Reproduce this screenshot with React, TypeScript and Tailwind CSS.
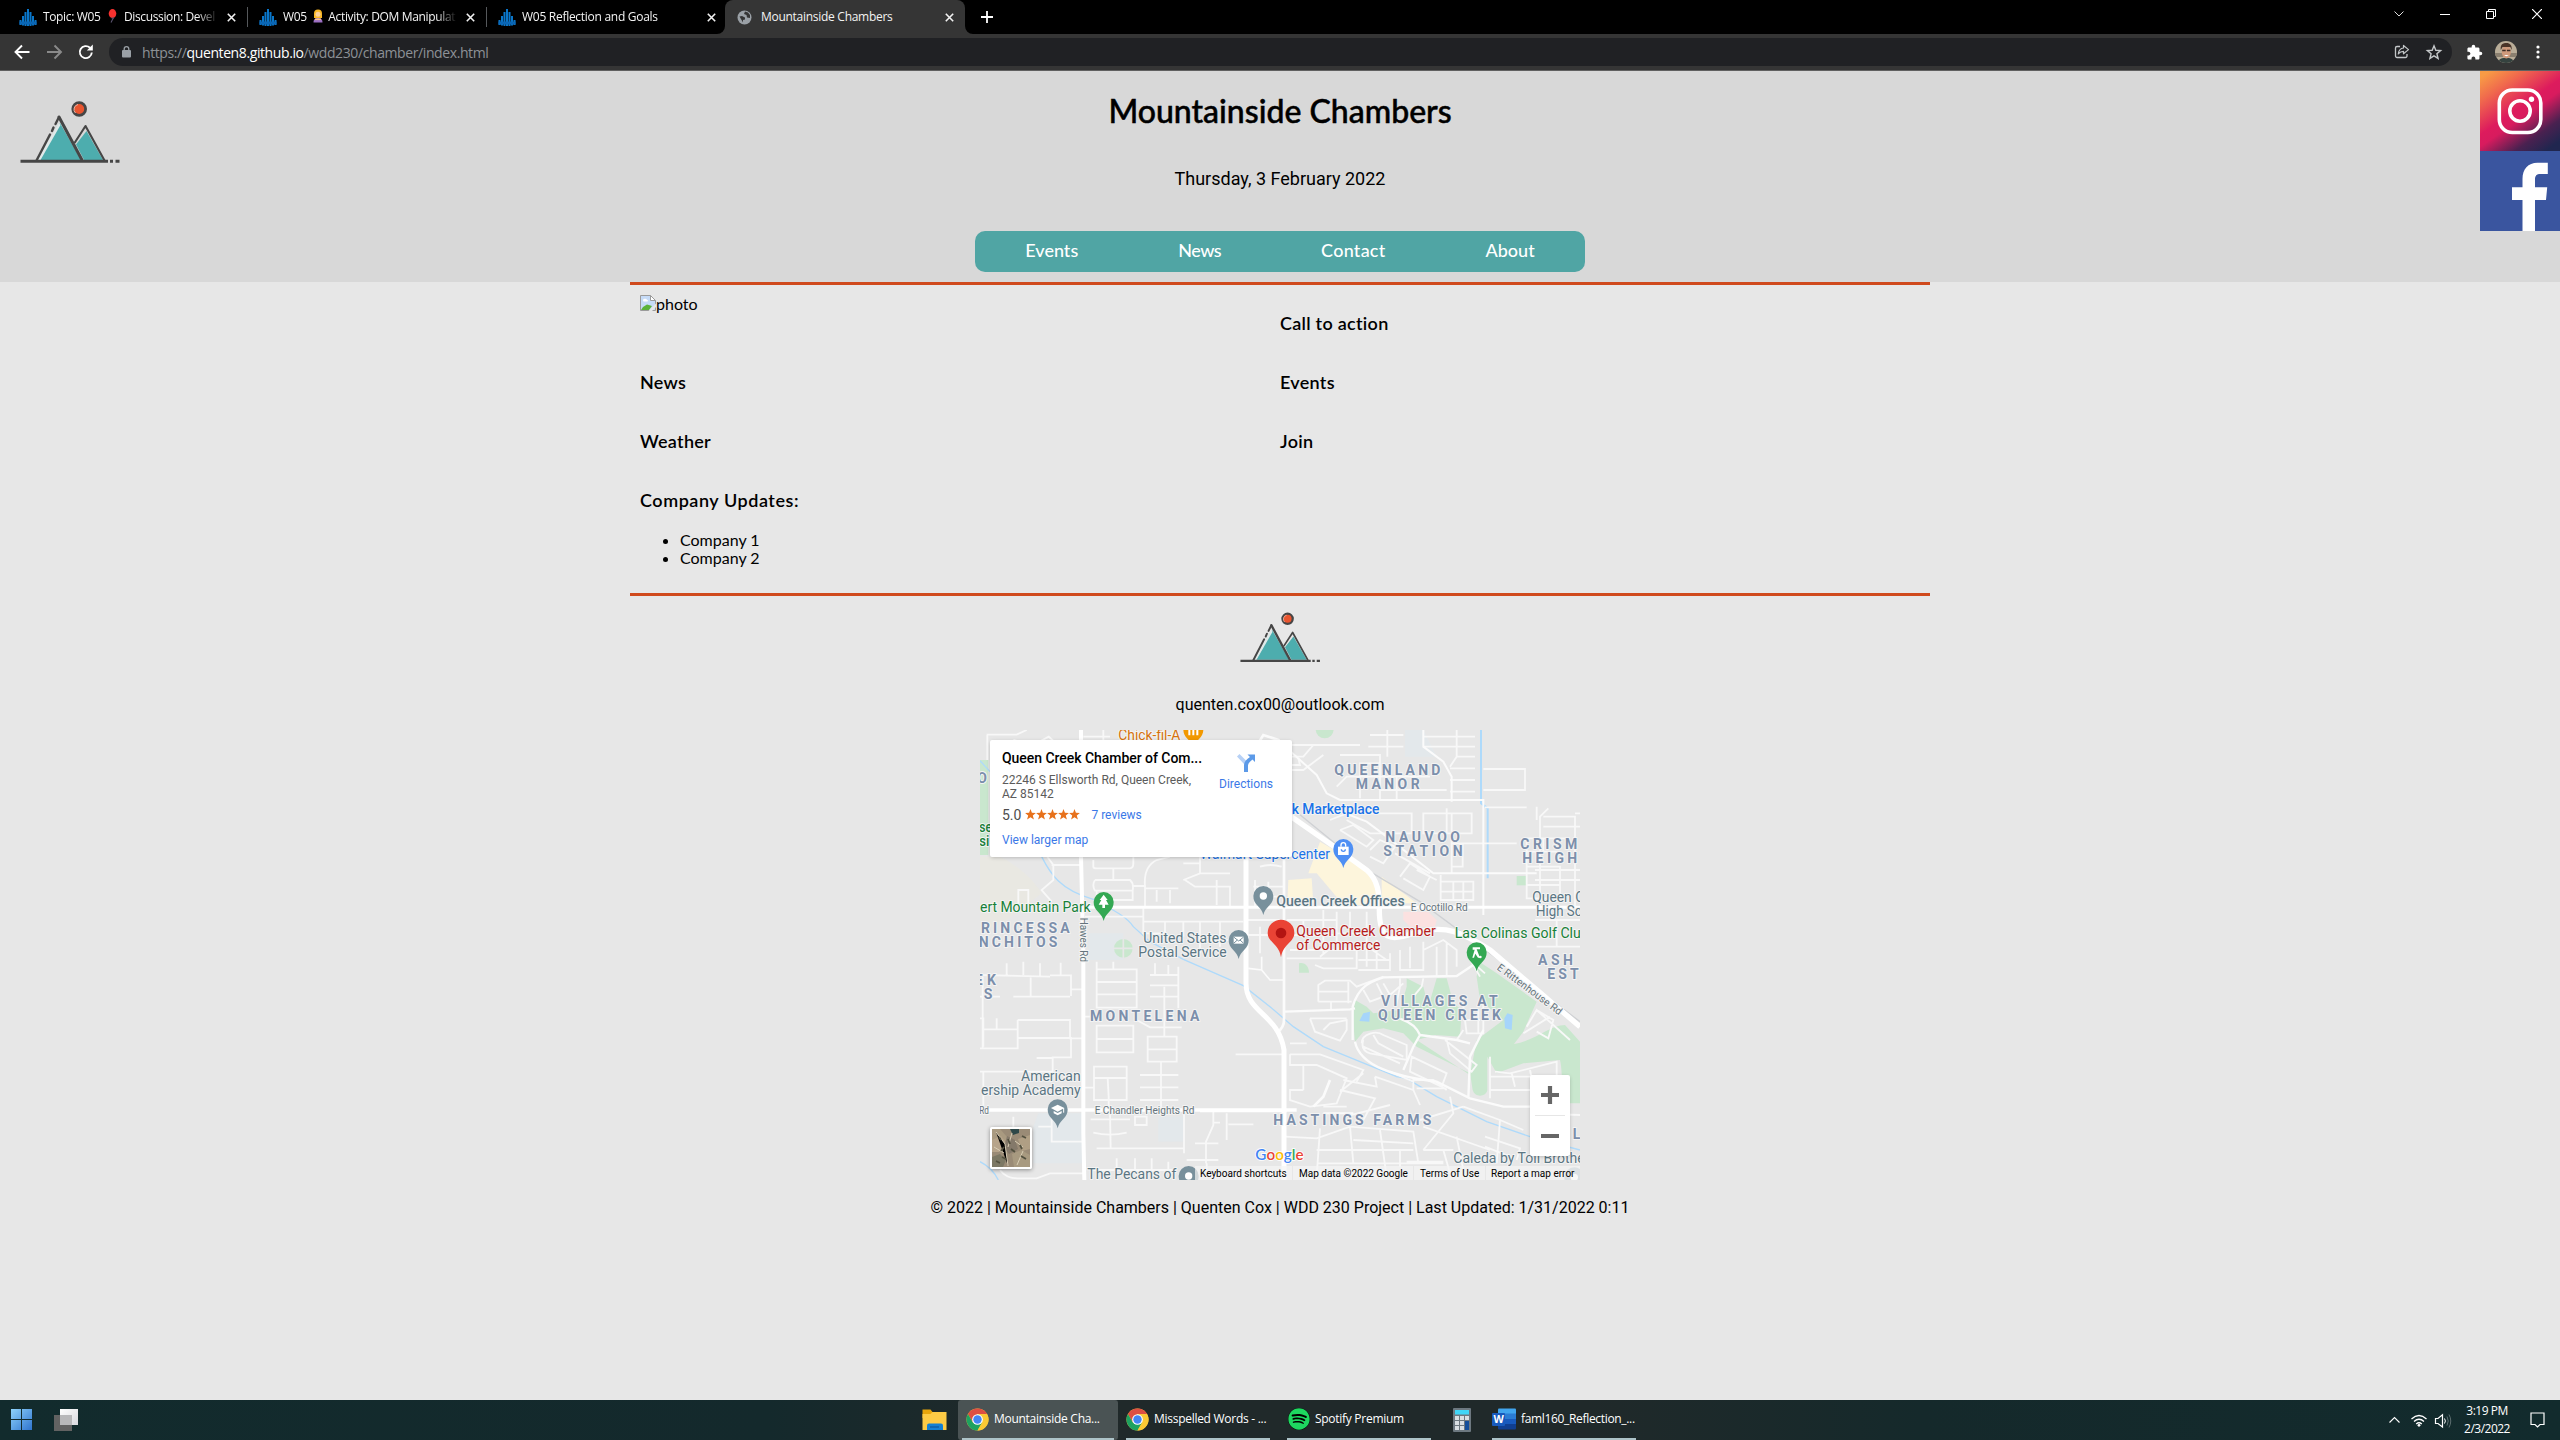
import React from 'react';
import { FaSpotify } from 'react-icons/fa';
import { MdExtension } from 'react-icons/md';

/* ---------- browser chrome ---------- */

function SchoolIcon() {
  return (
    <svg width="18" height="18" viewBox="0 0 18 18" className="shrink-0">
      <g fill="#0a76c9">
        <rect x="0.5" y="12" width="2" height="5" />
        <rect x="3" y="8" width="2" height="9.5" />
        <rect x="5.5" y="4" width="2" height="14" />
        <rect x="8" y="1" width="2" height="17" />
        <rect x="10.5" y="4" width="2" height="14" />
        <rect x="13" y="8" width="2" height="9.5" />
        <rect x="15.5" y="12" width="2" height="5" />
      </g>
      <path d="M0.5 13.5h17v3h-17z" fill="#0a66b5" />
    </svg>
  );
}

function Balloon() {
  return (
    <svg width="12" height="14" viewBox="0 0 12 14" className="mx-[3px] inline-block align-[-2px]">
      <ellipse cx="6.5" cy="4.6" rx="3.8" ry="4.5" fill="#f8312f" />
      <path d="M5.5 9 7.5 9 6.5 10.5 5 13.5" fill="none" stroke="#5b5470" strokeWidth="1.1" />
    </svg>
  );
}

function Person() {
  return (
    <svg width="12" height="14" viewBox="0 0 12 14" className="mx-[2px] inline-block align-[-2px]">
      <path d="M2 9V4.500a4 4 0 0 1 8 0V9z" fill="#f9b826" />
      <circle cx="6" cy="5.200" r="2.500" fill="#fbd09b" />
      <path d="M1.500 13.500c0-3.500 2-4.500 4.500-4.500s4.500 1 4.500 4.500z" fill="#9b6fc4" />
      <path d="M3 9.500h6v1.600H3z" fill="#fbc58a" />
    </svg>
  );
}

function CloseX({ className = '' }: { className?: string }) {
  return (
    <svg width="9" height="9" viewBox="0 0 9 9" className={'shrink-0 ' + className}>
      <path d="M0.8 0.8 8.2 8.2M8.2 0.8 0.8 8.2" stroke="#f2f2f2" strokeWidth="1.6" />
    </svg>
  );
}

function Tab({ children, sep, width }: { children: React.ReactNode; sep?: boolean; width: string }) {
  return (
    <div className={'flex h-[34px] items-center pl-[11px] ' + width}>
      <SchoolIcon />
      <div className="ml-[6px] w-[176px] overflow-hidden whitespace-nowrap [mask-image:linear-gradient(90deg,#000_88%,transparent)]">
        {children}
      </div>
      <CloseX className="ml-[9px]" />
      {sep && <div className="ml-[11px] h-5 w-px bg-[#55585b]" />}
    </div>
  );
}

function TabStrip() {
  return (
    <div className="flex h-[34px] bg-black font-['Open_Sans','Noto_Sans',sans-serif] text-[12px] tracking-[-0.28px] text-[#f3f3f3]">
      <div className="w-2" />
      <Tab sep width="w-[240px]"><span className="tracking-[-0.36px]">Topic: W05 <Balloon /> Discussion: Devel</span></Tab>
      <Tab sep width="w-[239px]"><span className="tracking-[-0.34px]">W05 <Person /> Activity: DOM Manipulat</span></Tab>
      <Tab width="w-[238px]">W05 Reflection and Goals</Tab>
      <div className="relative flex h-[34px] w-[240px] items-center rounded-t-[8px] bg-[#353535] pl-3">
        <svg width="8" height="8" className="absolute bottom-0 left-[-8px]"><path d="M8 0V8H0A8 8 0 0 0 8 0Z" fill="#353535" /></svg>
        <svg width="8" height="8" className="absolute right-[-8px] bottom-0"><path d="M0 0V8H8A8 8 0 0 1 0 0Z" fill="#353535" /></svg>
        <svg width="15" height="15" viewBox="0 0 15 15">
          <circle cx="7.500" cy="7.500" r="7" fill="#9aa0a6" />
          <path d="M2.500 6.500 5 6l3 1.500v2L6 10v2.500Z" fill="#353535" />
          <path d="M8 1.500 7 4l2.500 1 .5 2.500 3 .5V5L11 2.500Z" fill="#353535" />
        </svg>
        <div className="ml-[9px] w-[175px]">Mountainside Chambers</div>
        <CloseX className="ml-[9px]" />
      </div>
      <svg width="12" height="12" viewBox="0 0 12 12" className="mt-[11px] ml-4">
        <path d="M6 0v12M0 6h12" stroke="#fff" strokeWidth="1.800" />
      </svg>
      <div className="mt-[9px] ml-auto flex h-[10px] items-center gap-9 pr-[18px]">
        <svg width="10" height="10" viewBox="0 0 10 10"><path d="M0.500 2.500 5 7 9.500 2.500" fill="none" stroke="#ddd" strokeWidth="1" /></svg>
        <svg width="10" height="10" viewBox="0 0 10 10"><path d="M0 5.500h10" stroke="#fff" /></svg>
        <svg width="10" height="10" viewBox="0 0 10 10"><path d="M0.500 2.500h7v7h-7zM2.500 2.500v-2h7v7h-2" fill="none" stroke="#fff" /></svg>
        <svg width="10" height="10" viewBox="0 0 10 10"><path d="M0 0 10 10M10 0 0 10" stroke="#fff" strokeWidth="1.200" /></svg>
      </div>
    </div>
  );
}

function Toolbar() {
  return (
    <div className="flex h-[37px] items-center border-b border-[#606060] bg-[#353535] font-['Open_Sans','Noto_Sans',sans-serif]">
      <svg width="109" height="36" viewBox="0 34 109 36" fill="none" strokeWidth="1.900">
        <path d="M29.500 52H16M22 45.500 15.500 52 22 58.500" stroke="#fff" />
        <path d="M47 52H60.500M54.500 45.500 61 52 54.500 58.500" stroke="#8a8a8a" />
        <path d="M91.800 52.500A6 6 0 1 1 90 47.800" stroke="#fff" />
        <path d="M92.800 44.500V50.500H86.800Z" fill="#fff" stroke="none" />
      </svg>
      <div className="flex h-7 w-[2343px] items-center rounded-full bg-[#202124]">
        <svg width="9" height="12" viewBox="0 0 9 12" className="ml-[13px]">
          <rect x="0" y="4" width="9" height="7.500" rx="1" fill="#9aa0a6" />
          <path d="M2.200 5V3a2.300 2.300 0 0 1 4.600 0v2" fill="none" stroke="#9aa0a6" strokeWidth="1.300" />
        </svg>
        <div className="ml-[11px] text-[14px] tracking-[-0.4px] whitespace-nowrap text-[#8d9196]">
          https://<span className="text-white">quenten8.github.io</span>/wdd230/chamber/index.html
        </div>
        <svg width="60" height="20" viewBox="2390 42 60 20" fill="none" stroke="#c4c7c9" className="mr-[2px] ml-auto">
          <path d="M2400 46.500h-3a1.500 1.500 0 0 0-1.500 1.500v8a1.500 1.500 0 0 0 1.500 1.500h8.500a1.500 1.500 0 0 0 1.500-1.500v-2" strokeWidth="1.300" />
          <path d="M2403.500 45.500v2.500c-3 .3-4.800 2.200-5.200 6 1.500-2 3-2.700 5.200-2.700v2.500l5-4.200z" strokeWidth="1.200" strokeLinejoin="round" />
          <path d="M2434 45.800 2435.800 50.300 2440.600 50.600 2436.900 53.700 2438.100 58.400 2434 55.800 2429.900 58.400 2431.100 53.700 2427.400 50.600 2432.200 50.300Z" strokeWidth="1.400" />
        </svg>
      </div>
      <MdExtension className="ml-[14px] size-[17px] text-white" />
      <svg width="22" height="22" viewBox="0 0 22 22" className="ml-[12px] rounded-full">
        <rect width="22" height="22" fill="#b9ad98" />
        <rect y="12" width="22" height="4" fill="#8a7f6f" />
        <path d="M3 22c1-5 4-5 8-5s7 0 8 5z" fill="#35423f" />
        <ellipse cx="11.300" cy="11" rx="4.600" ry="6.500" fill="#cf9a7c" />
        <path d="M5.800 9C5 3 8 2 11.500 2S17 4 16.800 9l-1.500-3H7.500z" fill="#4a3428" />
        <path d="M7.200 9.500h3.500M11.900 9.500h3.500" stroke="#3a2b25" strokeWidth="1.500" />
        <path d="M9 14c1.500 1.500 3.300 1.500 4.800 0z" fill="#fff" />
      </svg>
      <svg width="4" height="14" viewBox="0 0 4 14" className="ml-[19px]" fill="#fff">
        <circle cx="2" cy="2" r="1.600" /><circle cx="2" cy="7" r="1.600" /><circle cx="2" cy="12" r="1.600" />
      </svg>
    </div>
  );
}

/* ---------- site ---------- */

function MountainLogo({ className }: { className: string }) {
  return (
    <svg viewBox="20 98 102 66" className={className}>
      <path d="M86.500 131 103 160H84L76 144.500Z" fill="#4dadae" />
      <path d="M60 123 81 160H40Z" fill="#4dadae" />
      <path d="M59 123 37 160H40.500L60.500 125Z" fill="#dfe9e9" />
      <path d="M74.500 143 85.500 126 104.500 160.500" fill="none" stroke="#464646" strokeWidth="2.100" strokeLinejoin="round" />
      <path d="M59 117 82 160" stroke="#464646" strokeWidth="3" strokeLinecap="round" />
      <path d="M59 117 55.500 124M53.500 127.500 52 131M50 134.500 36.500 160.500" fill="none" stroke="#464646" strokeWidth="2.400" strokeLinecap="round" />
      <path d="M20.500 161.300H108M110 161.300H113M115.500 161.300H119.500" stroke="#464646" strokeWidth="3" />
      <circle cx="79.200" cy="109" r="6.400" fill="#e9552f" stroke="#464646" strokeWidth="2.800" />
      <path d="M75.500 113A5 5 0 0 1 78 104.500" fill="none" stroke="#f3b5a3" strokeWidth="1" />
    </svg>
  );
}

function SocialLinks() {
  return (
    <div className="w-20 justify-self-end">
      <svg width="80" height="80" viewBox="0 0 80 80" className="block">
        <defs>
          <linearGradient id="insta" x1="0.120" y1="0" x2="0.820" y2="1">
            <stop offset="0" stopColor="#f89b45" />
            <stop offset="0.200" stopColor="#f0694d" />
            <stop offset="0.480" stopColor="#dd1b5d" />
            <stop offset="0.580" stopColor="#d81b5e" />
            <stop offset="0.820" stopColor="#4a2150" />
            <stop offset="1" stopColor="#20264f" />
          </linearGradient>
        </defs>
        <rect width="80" height="80" fill="url(#insta)" />
        <rect x="19.300" y="19" width="41.500" height="42.500" rx="13" fill="none" stroke="#fff" strokeWidth="3.600" />
        <circle cx="40" cy="40" r="10.200" fill="none" stroke="#fff" strokeWidth="3.600" />
        <circle cx="51.500" cy="28.300" r="2.700" fill="#fff" />
      </svg>
      <svg width="80" height="80" viewBox="0 0 80 80" className="block">
        <rect width="80" height="80" fill="#3a559f" />
        <path d="M42.500 80V49H32V36.200h10.500V28c0-10 5.500-16.300 15-16.300h10.300V23h-7.300c-4 0-5.500 1.800-5.500 5.500v7.700h12.200L66 49H55v31z" fill="#fff" />
      </svg>
    </div>
  );
}

function SiteHeader() {
  return (
    <header className="grid h-[211px] grid-cols-[1fr_auto_1fr] bg-[#d8d8d8]">
      <MountainLogo className="mt-[27px] ml-5 h-[66px] w-[102px]" />
      <div className="flex flex-col items-center pt-5">
        <h1 className="text-[32px] leading-10 font-medium [-webkit-text-stroke:0.5px_#000]">Mountainside Chambers</h1>
        <p className="mt-9 font-['Roboto',sans-serif] text-[18px] leading-6">Thursday, 3 February 2022</p>
        <nav className="mt-10 flex h-[41px] w-[610px] items-center justify-center gap-[100px] rounded-[10px] bg-[#50a5a4] pb-[2px] text-[18px] font-medium text-white">
          <a>Events</a>
          <a className="tracking-[-0.5px]">News</a>
          <a className="tracking-[0.25px]">Contact</a>
          <a>About</a>
        </nav>
      </div>
      <SocialLinks />
    </header>
  );
}

function BrokenImage() {
  return (
    <svg width="16" height="16" viewBox="0 0 16 16">
      <path d="M0.500 0.500h10l5 5v10h-15z" fill="#c6dbf7" stroke="#9b9b9b" />
      <path d="M10.500 0.500v5h5z" fill="#fff" stroke="#9b9b9b" />
      <path d="M3 5.500a2 1.500 0 0 1 4-.5c1.500 0 1.500 1.500 0 1.500H3.500z" fill="#fff" />
      <path d="M1 15l2-3 4-2.500L12 11 9 15z" fill="#5bb33a" />
      <path d="M8.500 16 16 8.500V12l-4 4z" fill="#e7e7e7" />
    </svg>
  );
}

function Section({ children }: { children: React.ReactNode }) {
  return <h3 className="pt-[21px] text-[18px] leading-6 font-semibold tracking-[0.28px]">{children}</h3>;
}

function MainContent() {
  return (
    <main className="grid h-[314px] w-[1300px] auto-rows-[59px] grid-cols-2 border-y-[3px] border-[#d04a1d] px-[10px] pt-[5px] text-black">
      <div className="flex items-start pt-[5px]">
        <BrokenImage />
        <span className="text-[16px] leading-[17px]">photo</span>
      </div>
      <Section>Call to action</Section>
      <Section>News</Section>
      <Section>Events</Section>
      <Section>Weather</Section>
      <Section>Join</Section>
      <div>
        <h3 className="pt-[21px] text-[18px] leading-6 font-semibold tracking-[0.55px]">Company Updates:</h3>
        <ul className="mt-[19px] list-disc pl-10 text-[16px] leading-[18px]">
          <li>Company 1</li>
          <li>Company 2</li>
        </ul>
      </div>
    </main>
  );
}

/* ---------- map ---------- */

function Pin({ x, y, color, children }: { x: number; y: number; color: string; children?: React.ReactNode }) {
  return (
    <g transform={`translate(${x} ${y})`}>
      <path d="M0 57C-3 45-8 38-17 29-26 20-30 12-30 0a30 30 0 0 1 60 0C30 12 26 20 17 29 8 38 3 45 0 57Z" fill={color} />
      {children}
    </g>
  );
}

type LabelProps = { x: number; y: number; w: number; children: string; cls: string };
function Label({ x, y, w, children, cls }: LabelProps) {
  return <text x={x} y={y} textLength={w} lengthAdjust="spacingAndGlyphs" className={cls}>{children}</text>;
}

/* Neighbourhood names are letter-spaced; w is the advance of the whole name. */
function Area({ x, y, w, children }: { x: number; y: number; w: number; children: string }) {
  return <text x={x} y={y} textLength={w} lengthAdjust="spacing" className="fill-[#7c8fab] text-[42px] font-bold">{children}</text>;
}

const poi = 'fill-[#5b7683] text-[42px]';
const green = 'fill-[#178038] text-[42px]';
const blue = 'fill-[#1a73e8] text-[42px] font-medium';
const road = 'fill-[#66747c] text-[31px]';

function MapDrawing() {
  return (
    <svg width="600" height="450" viewBox="30 30 1800 1350" className="block font-['Roboto',sans-serif]">
      <rect x="30" y="30" width="1800" height="1350" fill="#e7e7e7" />

      {/* parks, retail areas, schools */}
      <g>
        <path d="M30 120H55V405H30Z" fill="#c9e7ce" />
        <path d="M30 410H90C150 440 190 480 215 520L110 600 30 640Z" fill="#e9e8e2" />
        <path d="M355 640H460V720H355Z" fill="#e3e8eb" />
        <circle cx="460" cy="685" r="28" fill="#c9e7ce" />
        <path d="M460 655V715M430 685H490" stroke="#e7e7e7" strokeWidth="5" />
        <circle cx="1064" cy="28" r="27" fill="#c9e7ce" />
        <path d="M1305 30H1360L1400 110H1305Z" fill="#e3e8eb" />
        <path d="M1050 365 1110 400 1200 460 1228 505V555H1120L1040 460H1015Z" fill="#fdf5dc" />
        <path d="M1235 470 1340 550H1235Z" fill="#fdf5dc" />
        <path d="M955 480 1025 475 1030 550H952Z" fill="#fdf5dc" />
        <path d="M1300 575H1375L1400 600 1395 620H1320L1300 600Z" fill="#fbe1e0" />
        <rect x="1640" y="468" width="28" height="28" fill="#c9e7ce" />
        <path d="M987 730C1005 725 1017 740 1017 758H987Z" fill="#c9e7ce" />
        <path d="M205 1180H340V1330H190V1220Z" fill="#e3e8eb" />
        <path d="M565 1190H640V1265H565Z" fill="#e3e8eb" />
        <path d="M1528 725 1580 760 1700 845 1660 935 1632 972C1700 960 1740 915 1785 915L1830 965V1150H1800C1770 1140 1780 1060 1770 1020L1660 1030 1580 1060 1552 1010V1110C1550 1130 1515 1135 1508 1110L1500 1060 1340 980 1300 940 1240 925 1180 935 1155 965 1148 890 1155 840 1190 860 1210 880 1290 870 1310 800V775L1360 800 1375 860 1400 775H1430L1450 850 1475 870 1470 950 1395 945 1340 960 1500 1065 1520 960 1600 900 1530 840 1520 770Z" fill="#c9e7ce" />
        <path d="M1180 880 1200 875 1198 905 1168 903Z M1612 880 1628 885 1625 930 1605 925 1603 895Z" fill="#a6d5fb" />
      </g>

      {/* creeks and canals */}
      <g fill="none" stroke="#aedafb" strokeWidth="4">
        <path d="M30 122 60 155M215 410C240 460 270 510 370 538 430 570 470 590 490 620L540 665 640 718 820 797 900 860 970 920 1060 980 1280 1070 1310 1075 1400 1130 1550 1205 1680 1250 1830 1290" />
        <path d="M1533 30V250L1553 265V475" strokeWidth="6" />
        <path d="M30 1325C50 1335 70 1350 85 1380" />
      </g>
      <path d="M880 195 1200 455 1350 545 1600 730 1830 905" fill="none" stroke="#cfd1d4" strokeWidth="4" />

      {/* minor streets */}
      <g fill="none" stroke="#f8f8f8" strokeWidth="5.500">
        <path d="M50 44H140L170 30M52 44V120M130 60 190 75 236 50 280 90M400 30V60M340 50H420" />
        <path d="M232 410 250 435V480L215 510 245 545M245 435H330M145 555V510H175V550M370 420V440Q370 445 380 445H480Q490 445 490 430V410M430 445V480M375 480H480Q492 490 488 512H375Q365 495 375 480M380 512V540H488V512M345 590H520M525 500V560M488 498H525Q520 440 560 420L600 410M560 510V545M600 510V550M525 505H625M640 480 690 460H780M690 410V460M640 430H690M645 480 675 500H780V560M740 480V555M520 605H820M520 565V640H585V605M690 605V700M750 605V680M690 660H820M640 605V650M870 440Q900 430 935 440M850 500H940M855 480V560M895 485V555M850 530H940M830 600H930M870 620V700M835 645H940" />
        <path d="M30 765 240 770M110 730V765M160 725V765M210 730V770M272 728V766M30 830H90M130 830H300M182 770V830M240 766H303V828M30 895H40V980M80 895V928M42 928H143M38 770V985M143 900H300V955H345M143 900V985H30M143 954H303V1012H248V1060M200 1014H248M248 1055H150M152 1055H30M40 1055V1160M303 808H340" />
        <path d="M380 748H500V863H380ZM380 786H500M380 823H500M430 725V748M380 725V748M540 765H625M555 730V765M595 735V765M625 740V865M540 796H625M583 800V950M540 830H625M380 917H490V997H380ZM380 957H490M345 890H380M500 900 540 922H635M533 950H620V1025H533ZM533 988H620M573 1025V1170M510 1065H625M510 1102H625M510 1140H625M372 1040H470V1140H372ZM372 1074H470M413 1074 416 1130V1170M345 1103H372" />
        <path d="M362 1198H480M420 1180 422 1285M380 1285H640M642 1180V1300M495 1190H530V1215H495ZM370 1238Q420 1250 470 1238M730 1170V1215L708 1265V1330M750 1208H730M770 1180V1260M675 1270H745M650 1320H745M775 1213H850M797 1003H940M440 1315V1350M495 1315V1350M545 1315V1350M595 1325V1350M370 1350H610M710 1330V1355M245 1180V1265H340M205 1220H245M130 1190V1225H180M90 1350Q110 1378 150 1375H200L240 1360H340" />
        <path d="M940 75H1170M1300 45H1200M1195 80H1300M1252 30V110M1360 50H1515M1460 30V110L1440 140M1360 80H1515M1460 110H1515M1440 145H1515M1440 180H1515M1440 215H1515M940 110H1000L1030 75M1030 75H1150M1060 105 1000 150H940M940 135H990L985 115M1110 105H1230V240M1100 200 1130 170H1380M1170 235V130H1230M1280 130V240M1230 210H1430M1540 147H1665V210H1540M1545 262H1670" />
        <path d="M1080 300 1130 280H1325V340H1200L1130 300M1360 280H1505V340H1360ZM1430 265V340M1110 330 1150 315 1210 360 1190 380 1110 330M1200 390 1230 360 1275 380 1240 430 1200 410M1290 470 1320 430 1380 470 1360 510 1300 475M1275 400 1380 460M1340 450 1400 480M1445 280V460M1445 370H1640M1478 370V440H1445M1412 465V540H1510V485H1412M1450 485V540M1480 485V540M1412 515H1510M1670 355V535H1770V440H1670M1670 395H1770M1720 355V395M1670 495H1770M1670 355H1800M1700 300V260M1815 280H1920M1720 290H1815V560M1720 320H1830M1695 480H1830M1695 450H1830M1695 600H1830M1735 265 1710 290V560M1760 600V680M1700 680H1830" />
        <path d="M950 600H1100M955 645H1100M1000 600V650M1060 570V700M1100 575V690H960M1100 640H1190V575M1140 575V640M1100 685H1200L1250 720M1190 640V740M950 715H1150M1050 710 1075 690H1160V745H1060L1035 735M1165 750H1260V700M1220 660V750M1165 720H1260M1290 690V750H1360V665M1320 680V745M1360 690 1420 660 1460 690V740M1400 680V770M1430 670V770M1545 760 1500 720M1490 700 1530 770" />
        <path d="M1045 845V795L1065 782H1140L1160 800 1240 770M1045 815H1135V845M1045 845H1145M1083 845V870M1135 785V850M1180 810 1200 845 1240 830 1220 790M1240 790 1260 825 1300 790M1290 775V800L1280 850M1360 775 1355 800 1330 830M1020 895H1130M1020 895 1035 935 1110 962 1130 930V900L1080 910 1060 930" />
        <path d="M1175 970C1175 940 1220 930 1240 945L1310 975V1020L1200 1000Q1170 990 1180 960M1210 945 1225 970 1300 1010M1325 1010 1430 1060 1415 1100 1320 1055ZM1290 1030 1180 980M1425 960 1520 1035 1505 1055 1440 1000 1430 960M1480 860 1490 940H1540V850M1480 930 1460 960M1525 870V940M1480 900H1530M1560 1010V1135M1575 1055 1620 1060 1760 1025V1110H1560M1625 1060 1635 1100M1680 1050 1690 1100M1560 1070H1690M1670 920 1700 870 1800 960M1660 940 1740 890M1700 870 1750 900 1735 955 1700 935" />
        <path d="M960 1003H1050L1180 1050 1160 1085M960 1003V1035H1040L1130 1075 1100 1150 1020 1160 960 1140V1110H1000M1000 1035V1110M960 970H1010M1120 1080 1220 1100 1215 1070M1215 1070 1330 1110V1080H1390L1430 1110M1330 1110 1350 1155M1340 1105H1430M1110 1110 1215 1135 1180 1200M1130 1160H1060M1260 1055 1330 1085M1125 1190 1260 1155M1110 1115 1180 1060M1440 1130 1450 1180 1360 1290M1480 1160 1590 1200 1580 1330M1590 1200 1660 1230M1480 1160 1350 1200" />
        <path d="M945 1250 1040 1255 1140 1220 1330 1235 1345 1330M1050 1225 1040 1370M1140 1220 1150 1330M1230 1230 1250 1370M1040 1290H1330M1040 1330H1420M1150 1260 1330 1270M1360 1220 1560 1290M1450 1290H1360M1420 1290 1440 1360M1290 1290V1340M1460 1250 1480 1350M1545 1250 1650 1285 1640 1320M1545 1280 1620 1310M1310 1325H1420M1680 1180 1830 1185" />
      </g>
      {/* secondary streets */}
      <g fill="none" stroke="#fbfbfb" strokeWidth="8">
        <path d="M940 75 1040 165 1070 220 1110 240H1540V585" strokeWidth="6" />
        <path d="M1360 30V80L1420 125 1445 170V245M1100 270 1190 305 1250 350 1390 460H1700M1150 1180H1060" strokeWidth="6" />
        <path d="M942 410V900Q942 920 925 935" />
        <path d="M945 875 1140 868 1155 865M1148 960V860C1165 800 1200 785 1240 772L1460 768 1540 715M1155 965C1170 1040 1280 1070 1400 1085L1500 1135 1600 1160H1740M1300 1050 1330 980 1350 945C1330 900 1290 900 1290 895M1350 945 1460 960 1500 970M1495 1135 1500 1010 1540 930" strokeWidth="7" />
        <path d="M855 85 880 45 925 60 945 80M1030 1160 1060 1130 1080 1080" />
        <path d="M835 745 875 750 900 780H940M875 710V750" strokeWidth="5" />
      </g>
      {/* main roads */}
      <g fill="none" stroke="#fff">
        <path d="M333 30V410L340 700V1240L343 1380" strokeWidth="12" />
        <path d="M345 562H1830" strokeWidth="9" />
        <path d="M30 1170H980M690 1172H950" strokeWidth="10" />
        <path d="M828 410V790C828 880 925 880 942 990V1380" strokeWidth="15" />
        <path d="M935 270 1100 385 1190 450C1225 480 1228 520 1228 570 1228 660 1260 665 1330 640 1430 610 1480 640 1560 690L1830 920" strokeWidth="16" />
      </g>

      {/* labels */}
      <g stroke="#f4f4f4" strokeWidth="6" strokeLinejoin="round" paintOrder="stroke">
        <Label x={445} y={60} w={186} cls="fill-[#d5720c] text-[42px]">Chick-fil-A</Label>
        <Area x={22} y={189} w={28}>O</Area>
        <Label x={28} y={336} w={38} cls={green + ' font-medium'}>se</Label>
        <Label x={28} y={377} w={30} cls={green + ' font-medium'}>si</Label>
        <Area x={1093} y={165} w={318}>QUEENLAND</Area>
        <Area x={1157} y={207} w={192}>MANOR</Area>
        <Label x={965} y={282} w={263} cls={blue}>k Marketplace</Label>
        <Label x={690} y={417} w={390} cls="fill-[#1a73e8] text-[42px]">Walmart Supercenter</Label>
        <Area x={1246} y={366} w={224}>NAUVOO</Area>
        <Area x={1240} y={408} w={238}>STATION</Area>
        <Area x={1651} y={387} w={250}>CRISMON</Area>
        <Area x={1657} y={429} w={236}>HEIGHTS</Area>
        <Label x={919} y={558} w={385} cls={poi + ' font-medium'}>Queen Creek Offices</Label>
        <Label x={1322} y={573} w={171} cls={road}>E Ocotillo Rd</Label>
        <Label x={1687} y={546} w={234} cls={poi}>Queen Creek</Label>
        <Label x={1698} y={588} w={214} cls={poi}>High School</Label>
        <Label x={1454} y={654} w={402} cls={green}>Las Colinas Golf Club</Label>
        <Area x={1704} y={735} w={105}>ASH</Area>
        <Area x={1732} y={777} w={230}>ESTATES</Area>
        <Label x={979} y={648} w={418} cls="fill-[#b71c1c] text-[42px]">Queen Creek Chamber</Label>
        <Label x={979} y={690} w={252} cls="fill-[#b71c1c] text-[42px]">of Commerce</Label>
        <Label x={30} y={576} w={332} cls={green}>ert Mountain Park</Label>
        <Area x={33} y={640} w={266}>RINCESSA</Area>
        <Area x={26} y={682} w={236}>NCHITOS</Area>
        <Label x={520} y={670} w={249} cls={poi}>United States</Label>
        <Label x={505} y={711} w={265} cls={poi}>Postal Service</Label>
        <Area x={14} y={795} w={64}>EK</Area>
        <Area x={41} y={837} w={26}>S</Area>
        <Area x={360} y={904} w={328}>MONTELENA</Area>
        <Label x={153} y={1084} w={179} cls={poi}>American</Label>
        <Label x={33} y={1126} w={299} cls={poi}>ership Academy</Label>
        <Label x={28} y={1182} w={29} cls={road}>Rd</Label>
        <Label x={374} y={1181} w={299} cls={road}>E Chandler Heights Rd</Label>
        <Label x={352} y={1378} w={267} cls={poi}>The Pecans of</Label>
        <Area x={1233} y={858} w={350}>VILLAGES AT</Area>
        <Area x={1224} y={900} w={369}>QUEEN CREEK</Area>
        <Area x={910} y={1216} w={474}>HASTINGS FARMS</Area>
        <Label x={1450} y={1330} w={430} cls={poi}>Caleda by Toll Brothers</Label>
        <Area x={1808} y={1257} w={24}>L</Area>
        <g transform="translate(331 593) rotate(90)"><Label x={0} y={0} w={133} cls={road}>Hawes Rd</Label></g>
        <g transform="translate(1579 747) rotate(36.500)"><Label x={0} y={0} w={234} cls={road}>E Rittenhouse Rd</Label></g>
      </g>

      {/* place markers */}
      <Pin x={670} y={28} color="#f29900"><path d="M-12-20V18M0 0V18M12-20V18" fill="none" stroke="#fff" strokeWidth="6" /></Pin>
      <Pin x={401} y={546} color="#34a853"><path d="M0-22 12-6H7L15 8H4V18H-4V8H-15L-7-6H-12Z" fill="#fff" /></Pin>
      <Pin x={880} y={528} color="#78909c"><circle r="11" fill="#fff" /></Pin>
      <Pin x={806} y={660} color="#78909c"><path d="M-15-10H15V11H-15Z" fill="#fff" /><path d="M-15-9 0 3 15-9M-15 10-4 0M15 10 4 0" fill="none" stroke="#78909c" strokeWidth="3" /></Pin>
      <Pin x={1120} y={387} color="#4e8ff4"><path d="M-16-7H16V18H-16Z" fill="#fff" /><path d="M-7-7V-12A7 7 0 0 1 7-12V-7" fill="none" stroke="#fff" strokeWidth="4" /><path d="M-6 1A6 6 0 0 0 6 1" fill="none" stroke="#4e8ff4" strokeWidth="4" /></Pin>
      <Pin x={1520} y={697} color="#34a853"><path d="M-12-15H10V-9H0L10 16H4L-4 4-8 16H-13L-6-8H-12Z" fill="#fff" /><circle cx="11" cy="14" r="4" fill="#fff" /></Pin>
      <Pin x={263} y={1168} color="#78909c"><path d="M-20-4 0-14 20-4 0 7Z M-12 5 0 11 12 5V12L0 18-12 12Z" fill="#fff" /><path d="M18-4V10" stroke="#fff" strokeWidth="3" /></Pin>
      <Pin x={656} y={1368} color="#78909c"><circle r="11" fill="#fff" /></Pin>
      <Pin x={1813} y={1372} color="#9fb0b9"><circle r="11" fill="#fff" /></Pin>
      <path d="M933 712C930 694 924 684 912 672 900 660 893 652 893 639A40 40 0 0 1 973 639C973 652 966 660 954 672 942 684 936 694 933 712Z" fill="#ea4335" />
      <circle cx="933" cy="639" r="16" fill="#b31412" />

      {/* Google wordmark */}
      <text x="856" y="1319" textLength="145" lengthAdjust="spacingAndGlyphs" className="font-['Lato',sans-serif] text-[47px] font-semibold" stroke="#fff" strokeWidth="5" paintOrder="stroke">
        <tspan fill="#4285f4">G</tspan><tspan fill="#ea4335">o</tspan><tspan fill="#fbbc04">o</tspan><tspan fill="#4285f4">g</tspan><tspan fill="#34a853">l</tspan><tspan fill="#ea4335">e</tspan>
      </text>
    </svg>
  );
}

function MapCard() {
  return (
    <div className="absolute top-[10px] left-[10px] flex h-[117px] w-[302px] rounded-[2px] bg-white pl-3 text-[12px] leading-[14px] shadow-[0_1px_4px_-1px_rgba(0,0,0,0.3)]">
      <div className="w-[205px]">
        <div className="mt-[10px] text-[14px] leading-4 font-medium tracking-[-0.04px] whitespace-nowrap text-black">Queen Creek Chamber of Com...</div>
        <div className="mt-[7px] whitespace-nowrap text-[#5b5b5b]">22246 S Ellsworth Rd, Queen Creek,<br />AZ 85142</div>
        <div className="mt-[6px] flex items-center">
          <span className="text-[14px] leading-4 text-[#4d4d4d]">5.0</span>
          <svg width="55" height="11" viewBox="0 0 55 11" className="ml-1 mb-px" fill="#e7711b">
            {[0, 11, 22, 33, 44].map((x) => (
              <path key={x} transform={`translate(${x} 0)`} d="M5.500 0 6.900 3.700 10.900 3.900 7.800 6.400 8.900 10.500 5.500 8.200 2.100 10.500 3.200 6.400 0.100 3.900 4.100 3.700Z" />
            ))}
          </svg>
          <span className="ml-[11px] text-[#3b78e7]">7 reviews</span>
        </div>
        <div className="mt-[10px] text-[#3b78e7]">View larger map</div>
      </div>
      <div className="flex flex-1 flex-col items-center pt-[13px] pr-[7px] text-[#3b78e7]">
        <svg width="20" height="20" viewBox="0 0 20 20">
          <path d="M1 3.500 3.500 1 11 8.500 8 11Z" fill="#b7d1f6" />
          <path d="M8 19V12Q8 8 14 4L11.500 1.500H19V9L16.500 6.500Q12 10 12 12.500V19Z" fill="#5c9ae8" />
        </svg>
        <span className="mt-[4px]">Directions</span>
      </div>
    </div>
  );
}

function MapEmbed() {
  return (
    <div className="relative mt-[15px] h-[450px] w-[600px] overflow-hidden font-['Roboto',sans-serif]">
      <MapDrawing />
      <MapCard />
      <svg width="42" height="42" viewBox="0 0 42 42" className="absolute top-[397px] left-[10px] rounded-[2px] shadow-[0_1px_4px_rgba(0,0,0,0.4)]">
        <rect width="42" height="42" fill="#fff" />
        <rect x="2" y="2" width="38" height="38" fill="#9a8b76" />
        <path d="M2 2h8l8 9-6 6H2z" fill="#a99a80" />
        <path d="M20 2h9v4l-6 2z" fill="#2f4848" />
        <path d="M2 13l9-4 6 8-8 8H2z" fill="#b7a48a" />
        <path d="M17 9l8 4 3 9-9 5-5-6z" fill="#84796a" />
        <path d="M28 12l12-4v14l-8 2z" fill="#b09f84" />
        <path d="M2 30l8-3 6 6-3 7H2z" fill="#7c7864" />
        <path d="M22 27l9-4 9 5v12H24z" fill="#a89a80" />
        <path d="M25 14l8 6M6 5l9 12 3 22M33 24l-6 14M4 20l10 6M22 6l-4 14" stroke="#d8cdb4" strokeWidth="1" />
        <path d="M12 30l4 2M31 29l5 3M9 10l2 3M32 9l4 2M21 22l4 3M6 34l4 2M18 12l2 5M30 18l2 4M14 20l-3 4" stroke="#53513f" strokeWidth="1.800" />
      </svg>
      <div className="absolute top-[345px] left-[550px] flex h-[81px] w-10 flex-col items-center justify-center rounded-[2px] bg-white shadow-[0_1px_4px_-1px_rgba(0,0,0,0.3)]">
        <svg width="40" height="81" viewBox="0 0 40 81">
          <path d="M20 11v18M11 20h18M11 61h18" stroke="#666" strokeWidth="4.200" />
          <path d="M5 40.500h30" stroke="#e6e6e6" />
        </svg>
      </div>
      <div className="absolute right-0 bottom-0 flex h-[14px] gap-px text-[10px] leading-[15px] whitespace-nowrap text-black">
        <span className="w-[97px] bg-[#f5f5f5]/70 pl-[5px]">Keyboard shortcuts</span>
        <span className="w-[120px] bg-[#f5f5f5]/70 pl-[6px]">Map data ©2022 Google</span>
        <span className="w-[71px] bg-[#f5f5f5]/70 pl-[6px]">Terms of Use</span>
        <span className="w-[94px] bg-[#f5f5f5]/70 pl-[5px]">Report a map error</span>
      </div>
    </div>
  );
}

/* ---------- taskbar ---------- */

function ChromeIcon() {
  return (
    <svg width="23" height="23" viewBox="0 0 24 24" className="shrink-0">
      <circle cx="12" cy="12" r="11.500" fill="#fbc934" />
      <path d="M2.040 6.250A11.500 11.500 0 0 1 21.960 6.250H12L7.020 14.900Z" fill="#dd4f43" />
      <path d="M2.040 6.250A11.500 11.500 0 0 0 12 23.500L17 14.900H7.020Z" fill="#1da260" />
      <path d="M12 23.500 16.980 14.900 12 6.250H21.960A11.500 11.500 0 0 1 12 23.500Z" fill="#fbc934" />
      <circle cx="12" cy="12" r="5.600" fill="#fff" />
      <circle cx="12" cy="12" r="4.400" fill="#4285f4" />
    </svg>
  );
}

function TaskButton({ icon, label, className, line }: { icon: React.ReactNode; label: string; className: string; line: string }) {
  return (
    <div className={'flex h-10 flex-col ' + className}>
      <div className="flex h-[38px] items-center gap-[5px] pl-2 whitespace-nowrap">
        {icon}
        <span>{label}</span>
      </div>
      <div className={'h-[2px] bg-[#adc3c8] ' + line} />
    </div>
  );
}

function Taskbar() {
  return (
    <footer className="flex h-10 items-center bg-[linear-gradient(90deg,#122b2d_0%,#14292c_30%,#20292a_40%,#20292a_62%,#15292b_75%,#122b2d_100%)] font-['Open_Sans','Noto_Sans',sans-serif] text-[12px] tracking-[-0.28px] text-white">
      <svg width="80" height="24" viewBox="0 0 80 24" className="shrink-0">
        <defs>
          <linearGradient id="win" x1="0" y1="0" x2="1" y2="1"><stop offset="0" stopColor="#8fd3fb" /><stop offset="1" stopColor="#2f74cf" /></linearGradient>
          <linearGradient id="tv" x1="0" y1="0" x2="1" y2="1"><stop offset="0" stopColor="#fff" /><stop offset="1" stopColor="#d9d9de" /></linearGradient>
        </defs>
        <path d="M11 1H21V11H11ZM22 1H32V11H22ZM11 12H21V22H11ZM22 12H32V22H22Z" fill="url(#win)" />
        <rect x="60" y="1" width="18" height="16" fill="url(#tv)" />
        <rect x="54" y="7" width="18" height="16" fill="#626262" />
        <rect x="60" y="7" width="12" height="10" fill="#b8b8ba" />
      </svg>
      <svg width="25" height="22" viewBox="0 0 25 22" className="ml-[842px] shrink-0">
        <path d="M0.500 0.500h8l2 2.500h13v6h-23z" fill="#e8a50b" />
        <path d="M0.500 5h8l2-2H24.500v18h-24z" fill="#fdcb45" />
        <path d="M5 21v-4.500a2 2 0 0 1 2-2h12a2 2 0 0 1 2 2V21z" fill="#1380d4" />
        <path d="M8 18h9" stroke="#0b4f93" strokeWidth="1" />
      </svg>
      <TaskButton icon={<ChromeIcon />} label="Mountainside Cha..." className="ml-[11px] w-40 rounded-[3px] bg-[#4a5354]" line="ml-1 w-[152px]" />
      <TaskButton icon={<ChromeIcon />} label="Misspelled Words - ..." className="w-[162px]" line="ml-[8px] w-[144px]" />
      <TaskButton icon={<span className="size-[22px] rounded-full bg-black"><FaSpotify className="size-[22px] text-[#1ed760]" /></span>} label="Spotify Premium" className="w-[173px]" line="ml-[7px] w-[144px]" />
      <svg width="18" height="24" viewBox="0 0 18 24" className="shrink-0">
        <rect width="18" height="24" rx="1" fill="#6d7880" />
        <rect x="2" y="2" width="14" height="4.500" fill="#40d6f7" />
        <g fill="#d9dfe3">
          <path d="M2 8h4v4H2zM7 8h4v4H7zM12 8h4v4h-4zM2 13h4v4H2zM7 13h4v4H7zM2 18h4v4H2zM7 18h4v4H7z" />
        </g>
        <rect x="12" y="13" width="4" height="9" fill="#134e9b" />
      </svg>
      <TaskButton
        icon={
          <svg width="24" height="22" viewBox="0 0 24 22" className="shrink-0">
            <path d="M6 1.500Q6 .5 7 .5H23Q24 .5 24 1.500V6H6z" fill="#41a5ee" />
            <path d="M6 5.500H24V11H6z" fill="#2b7cd3" />
            <path d="M6 11H24V16H6z" fill="#185abd" />
            <path d="M6 16H24V20.500Q24 21.500 23 21.500H7Q6 21.500 6 20.500z" fill="#103f91" />
            <rect x="0" y="5" width="13" height="13" rx="1" fill="#185abd" />
            <text x="1.500" y="15" textLength="10" lengthAdjust="spacingAndGlyphs" className="fill-white font-['Open_Sans',sans-serif] text-[10px] font-bold">W</text>
          </svg>
        }
        label="faml160_Reflection_..."
        className="ml-[13px] w-[160px] tracking-[-0.33px]"
        line="ml-2 w-[144px]"
      />
      <svg width="66" height="24" viewBox="2388 1407 66 24" fill="none" stroke="#fff" className="ml-auto">
        <path d="M2389.500 1421.500 2394.500 1416.500 2399.500 1421.500" strokeWidth="1.100" />
        <path d="M2411.500 1418Q2419 1411 2426.500 1418M2414 1420.500Q2419 1416 2424 1420.500M2416.200 1423Q2419 1420.500 2421.800 1423" strokeWidth="1.300" />
        <circle cx="2419" cy="1424.300" r="1.400" fill="#fff" stroke="none" />
        <path d="M2435.500 1417.500H2438L2442.500 1413.800V1426L2438 1422.500H2435.500Z" strokeWidth="1.200" />
        <path d="M2444.500 1417.500Q2446.300 1420 2444.500 1422.500" />
        <path d="M2447 1415.500Q2449.500 1420 2447 1424.500M2449 1413.500Q2452.500 1420 2449 1426.500" stroke="#5d6e70" />
      </svg>
      <div className="ml-[9px] w-12 text-center leading-[18px] tracking-[-0.5px]">
        <div>3:19 PM</div>
        <div>2/3/2022</div>
      </div>
      <svg width="15" height="16" viewBox="0 0 15 16" fill="none" stroke="#fff" strokeWidth="1.200" className="mr-[15px] ml-[19px]">
        <path d="M1 1H14V12.500H10L7.500 15 5 12.500H1Z" />
      </svg>
    </footer>
  );
}

export default function App() {
  return (
    <div className="flex h-[1440px] w-[2560px] flex-col overflow-hidden bg-[#e7e7e7] font-['Lato',sans-serif] text-black">
      <TabStrip />
      <Toolbar />
      <SiteHeader />
      <div className="flex flex-1 flex-col items-center">
        <MainContent />
        <MountainLogo className="mt-[14px] ml-[2px] h-[53px] w-[82px]" />
        <p className="mt-[32px] font-['Roboto',sans-serif] text-[16px] leading-5">quenten.cox00@outlook.com</p>
        <MapEmbed />
        <p className="mt-[18px] font-['Roboto',sans-serif] text-[16px] leading-5">© 2022 | Mountainside Chambers | Quenten Cox | WDD 230 Project | Last Updated: 1/31/2022 0:11</p>
      </div>
      <Taskbar />
    </div>
  );
}
